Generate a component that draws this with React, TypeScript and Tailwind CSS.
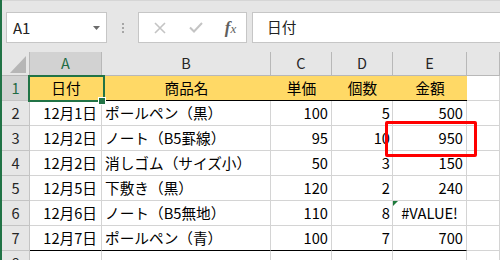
import React from "react";

const FONT = { fontFamily: '"Noto Sans CJK JP", "Liberation Sans", sans-serif' };

type Row = [string, string, number, number, number | string];

const rows: Row[] = [
  ["12月1日", "ポールペン（黒）", 100, 5, 500],
  ["12月2日", "ノート（B5罫線）", 95, 10, 950],
  ["12月2日", "消しゴム（サイズ小）", 50, 3, 150],
  ["12月5日", "下敷き（黒）", 120, 2, 240],
  ["12月6日", "ノート（B5無地）", 110, 8, "#VALUE!"],
  ["12月7日", "ポールペン（青）", 100, 7, 700],
];

function Toolbar() {
  return (
    <div className="h-[52px] flex items-start pt-[11px] border-t border-[#d6d6d6] bg-[#e6e6e6]">
      {/* Name box */}
      <div className="ml-[4px] w-[101px] h-[31px] bg-white border border-[#c6c6c6] flex items-center justify-between pl-[6px] pr-[6px]">
        <span className="text-[15px] text-[#222] leading-none">A1</span>
        <svg width="7" height="4" viewBox="0 0 7 4">
          <polygon points="0,0 7,0 3.5,4" fill="#6b6b6b" />
        </svg>
      </div>
      {/* dots */}
      <div className="w-[31px] h-[31px] flex flex-col items-center justify-center gap-[2px]">
        <div className="w-[2px] h-[2px] bg-[#a6a6a6]" />
        <div className="w-[2px] h-[2px] bg-[#a6a6a6]" />
        <div className="w-[2px] h-[2px] bg-[#a6a6a6]" />
      </div>
      {/* cancel / enter / fx */}
      <div className="w-[109px] h-[31px] bg-white border border-[#c6c6c6] flex items-center">
        <div className="w-[36px] flex justify-center pl-[6px]">
          <svg width="12" height="12" viewBox="0 0 12 12">
            <path d="M1 1 L11 11 M11 1 L1 11" stroke="#c4c4c4" strokeWidth="1.6" />
          </svg>
        </div>
        <div className="w-[36px] flex justify-center pl-[6px]">
          <svg width="14" height="11" viewBox="0 0 14 11">
            <path d="M1 5.5 L5 9.5 L13 1" stroke="#c4c4c4" strokeWidth="2" fill="none" />
          </svg>
        </div>
        <div className="flex-1 flex justify-center pl-[4px]">
          <span
            className="italic font-bold text-[#5f5f5f] text-[17px] leading-none"
            style={{ fontFamily: '"Liberation Serif", serif' }}
          >
            f<span className="text-[13px] font-normal">x</span>
          </span>
        </div>
      </div>
      {/* formula box */}
      <div className="ml-[5px] flex-1 h-[31px] bg-white border border-r-0 border-[#c6c6c6] flex items-center pl-[14px]">
        <span className="text-[14.67px] text-[#222] leading-none">日付</span>
      </div>
    </div>
  );
}

const colHead = "h-[24px] bg-[#e6e6e6] border-r border-b border-[#b8b8b8] flex items-center justify-center text-[14.5px] text-[#262626] leading-none";
const rowHead = "bg-[#e6e6e6] border-r border-b border-[#c4c4c4] flex items-center justify-center text-[14.67px] text-[#262626] leading-none";
const cell = "border-r border-b border-[#d4d4d4] flex items-center text-[14.67px] text-black leading-none whitespace-nowrap overflow-visible";
const head1 = "bg-[#ffd966] border-b border-black flex items-center justify-center text-[14.67px] leading-none";

export default function App() {
  return (
    <div
      className="w-[500px] h-[260px] overflow-hidden relative bg-white border-l-2 border-[#217346]"
      style={FONT}
    >
      <Toolbar />
      <div className="grid grid-cols-[28px_72px_169px_61px_61px_74px_1fr] grid-rows-[24px_repeat(8,25px)]">
        {/* header row */}
        <div className="bg-[#e6e6e6] border-r border-b border-[#b8b8b8] flex items-end justify-end pr-[3px] pb-[2px]">
          <svg width="16" height="17" viewBox="0 0 16 17">
            <polygon points="16,0 16,17 0,17" fill="#b6b6b6" />
          </svg>
        </div>
        <div className={colHead + " !bg-[#d2d2d2] !text-[#1e6b44]"}>A</div>
        <div className={colHead}>B</div>
        <div className={colHead}>C</div>
        <div className={colHead}>D</div>
        <div className={colHead}>E</div>
        <div className={colHead}></div>

        {/* row 1 */}
        <div className={rowHead + " !bg-[#d2d2d2] !text-[#1e6b44]"}>1</div>
        <div className={head1}>日付</div>
        <div className={head1}>商品名</div>
        <div className={head1}>単価</div>
        <div className={head1}>個数</div>
        <div className={head1}>金額</div>
        <div className={cell}></div>

        {rows.map((r, i) => {
          const last = i === rows.length - 1;
          const bb = last ? " !border-b-black" : "";
          const isErr = typeof r[4] === "string";
          return (
            <React.Fragment key={i}>
              <div className={rowHead}>{i + 2}</div>
              <div className={cell + bb + " justify-end pr-[4px]"}>{r[0]}</div>
              <div className={cell + bb + " justify-start pl-[3px]"}>{r[1]}</div>
              <div className={cell + bb + " justify-end pr-[3px]"}>{r[2]}</div>
              <div className={cell + bb + " justify-end pr-[2px]"}>{r[3]}</div>
              <div className={cell + bb + (isErr ? " justify-center relative" : " justify-end pr-[3px]")}>
                {isErr && (
                  <svg className="absolute left-0 top-0" width="5" height="5" viewBox="0 0 5 5">
                    <polygon points="0,0 5,0 0,5" fill="#1e7a3c" />
                  </svg>
                )}
                {r[4]}
              </div>
              <div className={cell}></div>
            </React.Fragment>
          );
        })}

        {/* row 8 */}
        <div className={rowHead}>8</div>
        <div className={cell}></div>
        <div className={cell}></div>
        <div className={cell}></div>
        <div className={cell}></div>
        <div className={cell}></div>
        <div className={cell}></div>
      </div>

      {/* selection A1 */}
      <div className="absolute left-[26px] top-[75px] w-[77px] h-[27px] border-2 border-[#217346]" />
      <div className="absolute left-[96px] top-[97px] w-[8px] h-[8px] bg-[#217346] border border-white" />

      {/* red highlight */}
      <div className="absolute left-[383px] top-[121px] w-[92px] h-[36px] border-[3px] border-[#ff0000] rounded-[2px]" />
    </div>
  );
}
